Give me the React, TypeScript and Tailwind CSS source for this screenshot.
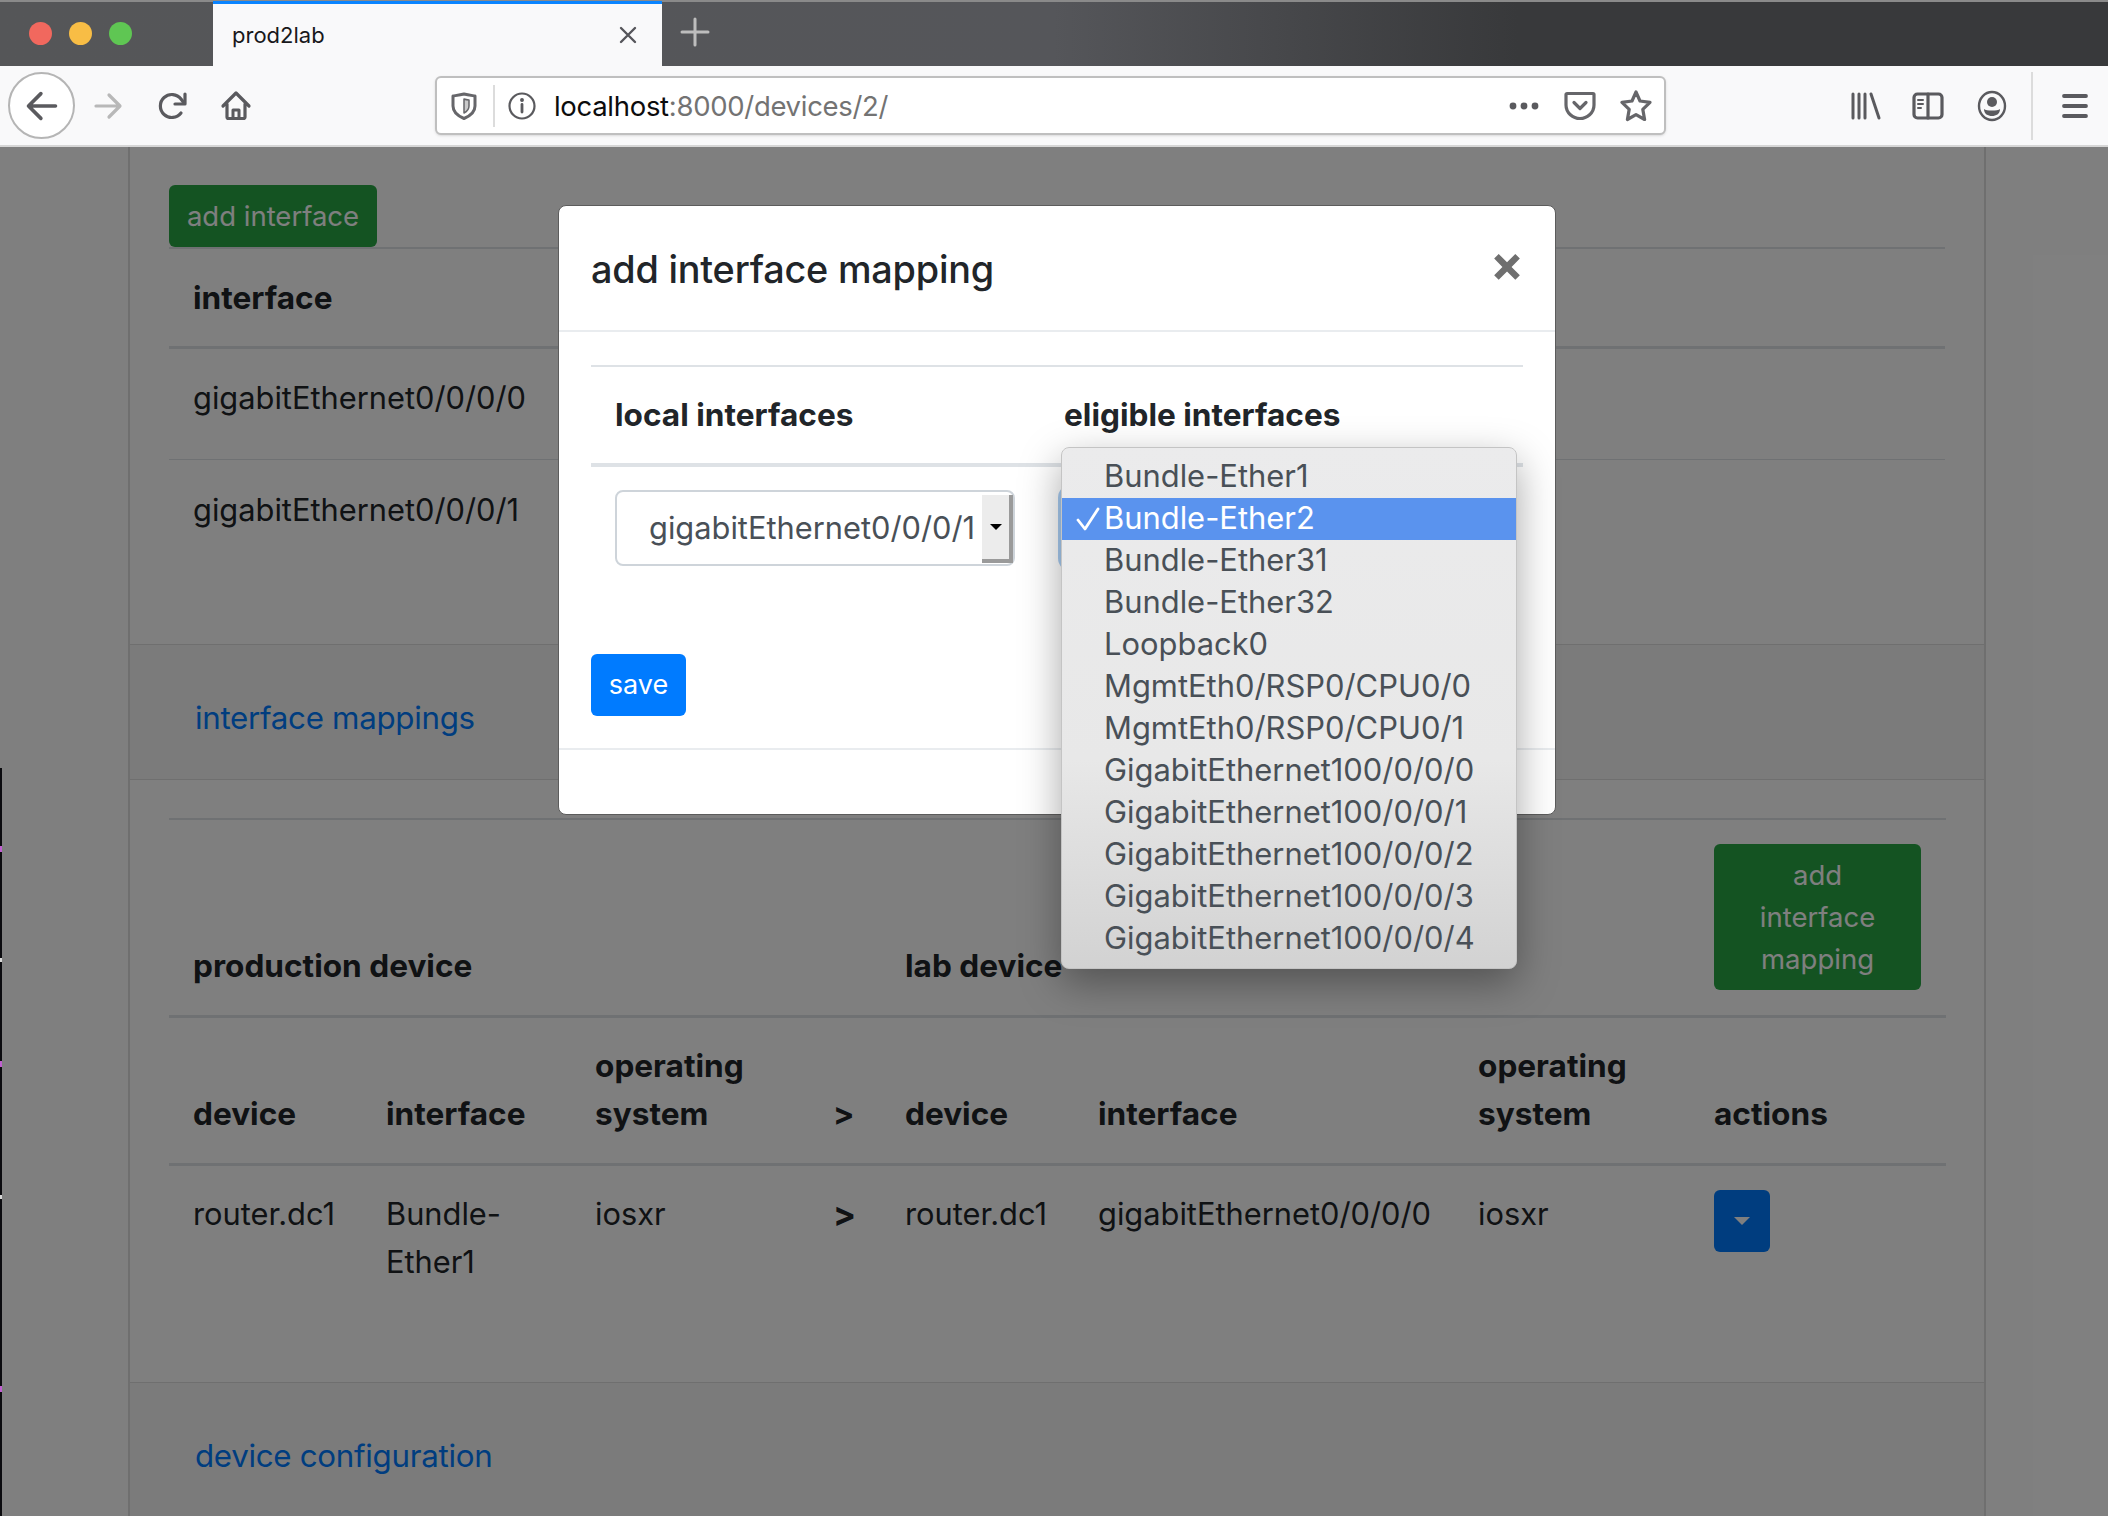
import React from 'react';

const interfaces = [
  'Bundle-Ether1',
  'Bundle-Ether2',
  'Bundle-Ether31',
  'Bundle-Ether32',
  'Loopback0',
  'MgmtEth0/RSP0/CPU0/0',
  'MgmtEth0/RSP0/CPU0/1',
  'GigabitEthernet100/0/0/0',
  'GigabitEthernet100/0/0/1',
  'GigabitEthernet100/0/0/2',
  'GigabitEthernet100/0/0/3',
  'GigabitEthernet100/0/0/4',
];

const Icon: React.FC<{ className?: string; children: React.ReactNode }> = ({ className, children }) => (
  <svg viewBox="0 0 32 32" fill="none" stroke="currentColor" strokeLinecap="round" strokeLinejoin="round" className={`shrink-0 w-8 h-8 ${className ?? ''}`}>
    {children}
  </svg>
);

const BrowserChrome: React.FC = () => (
  <div className="font-['Inter',sans-serif]">
    <div className="flex h-[66px] bg-linear-to-r from-[#555658] via-[#55565a] via-50% to-[#38393b] to-[72%] border-t-2 border-[#8a8a8a]">
      <div className="w-[213px] flex items-center gap-[17px] pl-[29px] pb-[2px]">
        <span className="w-[23px] h-[23px] rounded-full bg-[#f1685e]"></span>
        <span className="w-[23px] h-[23px] rounded-full bg-[#f8bd45]"></span>
        <span className="w-[23px] h-[23px] rounded-full bg-[#5fc653]"></span>
      </div>
      <div className="w-[449px] -mt-[1px] bg-[#f9f9fa] border-t-[3px] border-[#0a84ff] flex items-center pl-[19px] pr-[18px]">
        <span className="text-[22px] text-[#18181a] pt-[1px]">prod2lab</span>
        <Icon className="ml-auto text-[#55555a] -mt-[1px]">
          <path d="M9 9 L23 23 M23 9 L9 23" strokeWidth="2.4" />
        </Icon>
      </div>
      <Icon className="ml-[17px] mt-[14px] text-[#bdbdbd]">
        <path d="M16 3 V29 M3 16 H29" strokeWidth="3" />
      </Icon>
    </div>
    <div className="flex items-center h-[81px] bg-[#f9f9fa] border-b-2 border-[#d6d6d6] text-[#5a5a5e]">
      <div className="ml-[8px] w-[67px] h-[67px] rounded-full bg-white border-2 border-[#b5b5b5] flex items-center justify-center">
        <Icon className="w-9 h-9">
          <path d="M28 16 H5 M15 5 L4 16 L15 27" strokeWidth="3.2" />
        </Icon>
      </div>
      <Icon className="ml-[17px] text-[#b8b8b8]">
        <path d="M4 16 H27 M17 5 L28 16 L17 27" strokeWidth="3.2" />
      </Icon>
      <Icon className="ml-[32px]">
        <path d="M25 23 A11.5 11.5 0 1 1 25 9 L28 13" strokeWidth="3.2" />
        <path d="M29 4 V14 H19" strokeWidth="3.2" />
      </Icon>
      <Icon className="ml-[32px]">
        <path d="M3 16 L16 3 L29 16 M7 14 V27 a1.5 1.5 0 0 0 1.5 1.5 H23.5 a1.5 1.5 0 0 0 1.5 -1.5 V14" strokeWidth="3.2" />
        <path d="M13 28 V20 H19 V28" strokeWidth="3" />
      </Icon>

      <div className="ml-[183px] w-[1231px] h-[59px] bg-white rounded-[6px] border-2 border-[#bfbfbf] shadow-sm flex items-center">
        <Icon className="ml-[11px] text-[#66666a]">
          <path d="M16 4 C20 5 24 5.5 27 6 V16 C27 22 22 26 16 28.5 C10 26 5 22 5 16 V6 C8 5.5 12 5 16 4 Z" strokeWidth="3" />
          <path d="M16 9 C17.5 9.5 19 9.8 21 10 V16 C21 19 19 21.5 16 23 Z" fill="currentColor" fillOpacity="0.35" strokeWidth="1.5" />
        </Icon>
        <span className="ml-[13px] w-[2px] h-[42px] bg-[#dcdcdc]"></span>
        <Icon className="ml-[11px]">
          <circle cx="16" cy="16" r="12.5" strokeWidth="2.2" />
          <path d="M16 14.5 V22" strokeWidth="2.8" />
          <circle cx="16" cy="10" r="1.2" fill="currentColor" strokeWidth="1.5" />
        </Icon>
        <span className="ml-[16px] pt-[3px] text-[27.5px] text-[#0c0c0d] tracking-[-0.3px]">
          localhost<span className="text-[#737373]">:8000/devices/2/</span>
        </span>
        <Icon className="ml-auto">
          <circle cx="5" cy="16" r="3.4" fill="currentColor" stroke="none" />
          <circle cx="16" cy="16" r="3.4" fill="currentColor" stroke="none" />
          <circle cx="27" cy="16" r="3.4" fill="currentColor" stroke="none" />
        </Icon>
        <Icon className="ml-[24px] text-[#66666a]">
          <path d="M3 3.5 H29 a1 1 0 0 1 1 1 V15 C30 23 23 28.5 16 28.5 C9 28.5 2 23 2 15 V4.5 a1 1 0 0 1 1 -1 Z" strokeWidth="3.2" />
          <path d="M10 12.5 L16 18.5 L22 12.5" strokeWidth="3.2" />
        </Icon>
        <Icon className="ml-[24px] mr-[12px] text-[#66666a]">
          <path d="M16 2 L20 11 L30 12.4 L22.8 19.4 L24.6 29.5 L16 24.6 L7.4 29.5 L9.2 19.4 L2 12.4 L12 11 Z" strokeWidth="3.2" />
        </Icon>
      </div>

      <Icon className="ml-[183px]">
        <path d="M4 4 V28 M10 4 V28 M16 4 V28 M22 4 L30 28" strokeWidth="3" />
      </Icon>
      <Icon className="ml-[31px]">
        <rect x="2" y="4" width="28" height="24" rx="3.5" strokeWidth="3.2" />
        <path d="M16 4 V28" strokeWidth="3.2" />
        <path d="M6 10 H11 M6 14 H11 M6 18 H9" strokeWidth="2" />
      </Icon>
      <Icon className="ml-[32px]">
        <ellipse cx="16" cy="16" rx="13" ry="14" strokeWidth="2.4" />
        <circle cx="16" cy="12" r="5" fill="currentColor" stroke="none" />
        <path d="M8 19 C10 21 22 21 24 19 C24 24 20 26 16 26 C12 26 8 24 8 19 Z" fill="currentColor" stroke="none" />
      </Icon>
      <span className="ml-[23px] w-[2px] h-[68px] bg-[#dcdcdc]"></span>
      <Icon className="ml-[26px]">
        <path d="M5 6 H27 M5 16 H27 M5 26 H27" strokeWidth="3.8" />
      </Icon>
    </div>
  </div>
);

const Section: React.FC<{ title: string }> = ({ title }) => (
  <div className="h-[136px] bg-black/[.03] border-y border-[#dfdfdf] pl-[65px] pt-[49px]">
    <a className="text-[#007bff] text-[31.3px] leading-[42px] tracking-[-0.3px]">{title}</a>
  </div>
);

const DevicePage: React.FC = () => (
  <div className="h-[1369px] overflow-hidden pl-[128px] pr-[122px] text-[#212529] text-[30.8px] leading-[48px]">
    <div className="border-x-2 border-[#dfdfdf] h-full">
      <div className="h-[497px] px-[39px] pt-[38px]">
        <button className="bg-[#28a745] text-white rounded-[6px] h-[62px] w-[208px] text-[27.5px] leading-[42px] block">add interface</button>
        <table className="w-full border-t-2 border-[#dee2e6]">
          <thead>
            <tr>
              <th className="text-left text-[31.6px] font-bold px-[24px] pt-[25px] pb-[24px] border-b-[3px] border-[#dee2e6]">interface</th>
            </tr>
          </thead>
          <tbody>
            <tr>
              <td className="h-[112px] align-top px-[24px] pt-[25px] border-b border-[#dee2e6]">gigabitEthernet0/0/0/0</td>
            </tr>
            <tr>
              <td className="h-[111px] align-top px-[24px] pt-[26px]">gigabitEthernet0/0/0/1</td>
            </tr>
          </tbody>
        </table>
      </div>
      <Section title="interface mappings" />
      <div className="h-[602px] px-[39px] pt-[38px]">
        <table className="w-[1777px] table-fixed border-t-2 border-[#dee2e6]">
          <colgroup>
            <col className="w-[193px]" />
            <col className="w-[209px]" />
            <col className="w-[238px]" />
            <col className="w-[72px]" />
            <col className="w-[193px]" />
            <col className="w-[380px]" />
            <col className="w-[237px]" />
            <col className="w-[255px]" />
          </colgroup>
          <thead className="font-bold text-left text-[31.6px]">
            <tr className="border-b-[3px] border-[#dee2e6]">
              <th colSpan={4} className="align-bottom px-[24px] pb-[25px]">production device</th>
              <th colSpan={3} className="align-bottom px-[24px] pb-[25px]">lab device</th>
              <th className="pl-[23px] pr-[24px] pt-[24px] pb-[25px]">
                <button className="block w-[207px] h-[146px] px-[21px] bg-[#28a745] rounded-[6px] text-white text-center font-normal text-[27.5px] leading-[42px]">add interface mapping</button>
              </th>
            </tr>
            <tr className="border-b-[3px] border-[#dee2e6]">
              <th className="align-bottom px-[24px] pt-[24px] pb-[25px]">device</th>
              <th className="align-bottom px-[24px] pt-[24px] pb-[25px]">interface</th>
              <th className="align-bottom px-[24px] pt-[24px] pb-[25px]">operating system</th>
              <th className="align-bottom px-[24px] pt-[24px] pb-[25px]">&gt;</th>
              <th className="align-bottom px-[24px] pt-[24px] pb-[25px]">device</th>
              <th className="align-bottom px-[24px] pt-[24px] pb-[25px]">interface</th>
              <th className="align-bottom px-[24px] pt-[24px] pb-[25px]">operating system</th>
              <th className="align-bottom pl-[23px] pr-[24px] pt-[24px] pb-[25px]">actions</th>
            </tr>
          </thead>
          <tbody>
            <tr>
              <td className="align-top px-[24px] pt-[24px]">router.dc1</td>
              <td className="align-top px-[24px] pt-[24px]">Bundle-Ether1</td>
              <td className="align-top px-[24px] pt-[24px]">iosxr</td>
              <td className="align-top px-[24px] pt-[24px] font-bold text-[34px]">&gt;</td>
              <td className="align-top px-[24px] pt-[24px]">router.dc1</td>
              <td className="align-top px-[24px] pt-[24px]">gigabitEthernet0/0/0/0</td>
              <td className="align-top px-[24px] pt-[24px]">iosxr</td>
              <td className="align-top pl-[23px] pr-[24px] pt-[24px]">
                <button className="w-[56px] h-[62px] bg-[#007bff] rounded-[6px] flex items-center justify-center">
                  <span className="w-0 h-0 border-x-[8px] border-x-transparent border-t-[8px] border-t-white"></span>
                </button>
              </td>
            </tr>
          </tbody>
        </table>
      </div>
      <Section title="device configuration" />
    </div>
  </div>
);

const EligibleList: React.FC = () => (
  <ul className="absolute left-[502px] top-[241px] w-[456px] h-[522px] pt-[8px] rounded-[8px] border border-[#c4c4c4] bg-linear-to-b from-[#ebebec] via-[#e8e8e8] via-[60%] to-[#d2d2d2] shadow-[0_14px_40px_rgba(0,0,0,0.35)] text-[#495057] text-[30.9px] leading-[40px]">
    {interfaces.map((name) => (
      <li key={name} className={`relative h-[42px] pl-[42px] ${name === 'Bundle-Ether2' ? 'bg-[#5a93ee] text-white' : ''}`}>
        {name === 'Bundle-Ether2' && (
          <svg viewBox="0 0 24 24" fill="none" stroke="white" strokeWidth="2.8" strokeLinecap="round" strokeLinejoin="round" className="absolute left-[14px] top-[9px] w-6 h-6">
            <path d="M2 13 L9 22 L22 2" />
          </svg>
        )}
        {name}
      </li>
    ))}
  </ul>
);

const MappingModal: React.FC = () => (
  <div className="absolute left-[558px] top-[205px] w-[998px] h-[610px] bg-white rounded-[8px] border border-[#5c5c5c] text-[#212529] text-[30.8px] leading-[48px]">
    <div className="relative h-[126px] border-b-2 border-[#e9ecef] pl-[32px] pt-[33px]">
      <h5 className="text-[37.8px] leading-[60px] font-medium tracking-[-0.2px]">add interface mapping</h5>
      <span className="absolute right-[31px] top-[22px] text-[#6f6f6f] text-[50px] leading-[70px] font-bold">×</span>
    </div>
    <div className="px-[32px] pt-[33px]">
      <table className="w-full table-fixed border-t-2 border-[#dee2e6]">
        <thead className="text-left text-[31.6px]">
          <tr className="border-b-[4px] border-[#dee2e6]">
            <th className="w-[449px] px-[24px] pt-[24px] pb-[24px] font-bold">local interfaces</th>
            <th className="px-[24px] pt-[24px] pb-[24px] font-bold">eligible interfaces</th>
          </tr>
        </thead>
        <tbody>
          <tr>
            <td className="px-[24px] pt-[23px] align-top">
              <div className="relative w-[400px] h-[76px] rounded-[8px] border-2 border-[#ced4da] pl-[32px] flex items-center text-[#495057]">
                gigabitEthernet0/0/0/1
                <span className="absolute right-0 top-[3px] w-[31px] h-[68px] bg-[#ececec] border-r-4 border-b-4 border-[#9a9a9a] flex items-center justify-center">
                  <span className="w-0 h-0 border-x-[6px] border-x-transparent border-t-[6px] border-t-black"></span>
                </span>
              </div>
            </td>
            <td className="px-[24px] pt-[23px] align-top">
              <div className="w-[398px] h-[76px] rounded-[8px] bg-white ring-[6px] ring-[#a9cdf2]"></div>
            </td>
          </tr>
        </tbody>
      </table>
      <button className="mt-[88px] block w-[95px] h-[62px] bg-[#007bff] text-white rounded-[6px] text-[27px] leading-[42px]">save</button>
    </div>
    <div className="mt-[32px] border-t-2 border-[#e9ecef]"></div>
    <EligibleList />
  </div>
);

const App: React.FC = () => (
  <div className="relative w-[2108px] h-[1516px] overflow-hidden bg-white font-['Inter',sans-serif]">
    <BrowserChrome />
    <DevicePage />
    {/* modal backdrop */}
    <div className="absolute inset-x-0 top-[147px] bottom-0 bg-black/50"></div>
    <MappingModal />
    {/* desktop showing past the window edge */}
    <div className="absolute left-0 top-[768px] bottom-0 w-[2px] bg-[#0b0b0f]">
      <div className="absolute top-[78px] h-[6px] w-full bg-[#c060d0]"></div>
      <div className="absolute top-[190px] h-[4px] w-full bg-[#d8d8d8]"></div>
      <div className="absolute top-[293px] h-[6px] w-full bg-[#c060d0]"></div>
      <div className="absolute top-[427px] h-[4px] w-full bg-[#d8d8d8]"></div>
      <div className="absolute top-[618px] h-[6px] w-full bg-[#c060d0]"></div>
    </div>
  </div>
);

export default App;
